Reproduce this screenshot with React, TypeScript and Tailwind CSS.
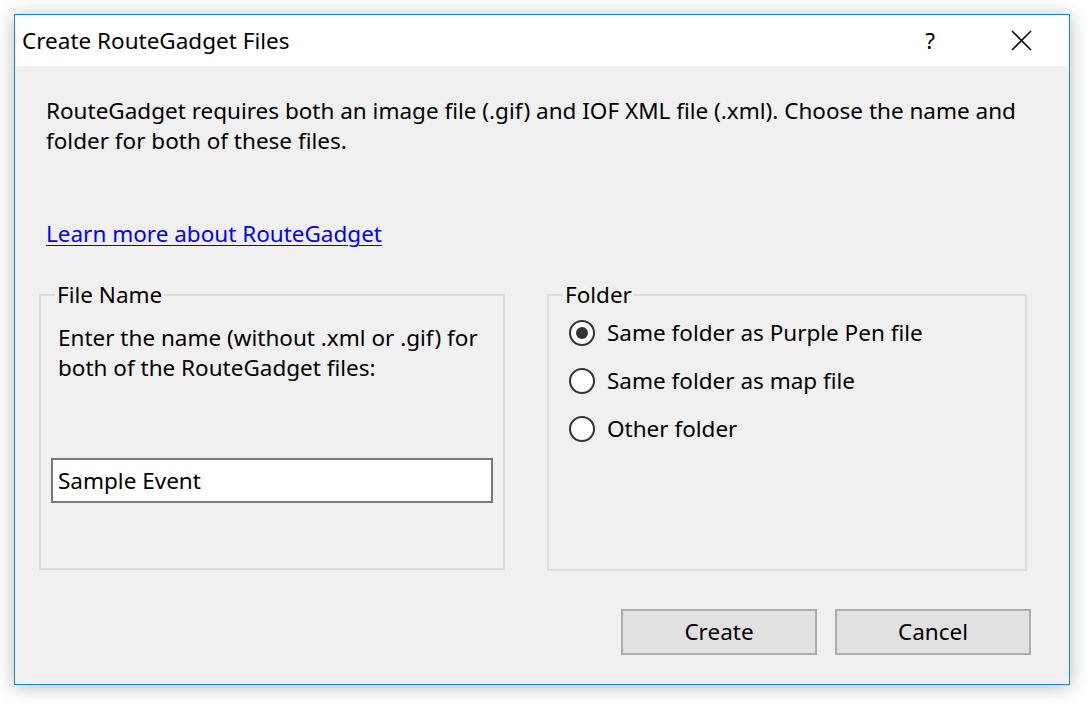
import React from "react";

function Radio({ checked, label }: { checked?: boolean; label: string }) {
  return (
    <div className="flex items-center h-[26px]">
      <div className="w-[26px] h-[26px] rounded-full border-2 border-[#333333] bg-white flex items-center justify-center shrink-0">
        {checked && <div className="w-[12px] h-[12px] rounded-full bg-[#333333]" />}
      </div>
      <span className="ml-[12px] whitespace-nowrap leading-[30px]">{label}</span>
    </div>
  );
}

export default function App() {
  return (
    <div
      className="w-[1088px] h-[703px] bg-white pl-[14px] pt-[14px] text-[22.5px] text-black"
      style={{ fontFamily: '"Noto Sans", "Open Sans", sans-serif' }}
    >
      <div className="w-[1056px] h-[671px] border border-[#1883d7] bg-[#f0f0f0] flex flex-col shadow-[0_2px_18px_rgba(0,0,0,0.28)]">
        {/* Title bar */}
        <div className="h-[51px] bg-white flex items-center shrink-0">
          <span className="ml-[7px] leading-[30px] whitespace-nowrap">Create RouteGadget Files</span>
          <span className="ml-auto leading-[30px]">?</span>
          <div className="ml-[76px] mr-[37px] w-[21px] h-[21px] flex items-center justify-center">
            <svg width="21" height="21" viewBox="0 0 21 21">
              <path d="M1 1 L20 20 M20 1 L1 20" stroke="#111" strokeWidth="1.6" fill="none" />
            </svg>
          </div>
        </div>

        {/* Body */}
        <div className="flex-1 pl-[24px] pt-[30px]">
          <p className="ml-[7px] leading-[30px] whitespace-nowrap">
            RouteGadget requires both an image file (.gif) and IOF XML file (.xml). Choose the name and
            <br />
            folder for both of these files.
          </p>
          <div className="ml-[7px] mt-[63px] leading-[30px]">
            <a className="text-[#0000ff] underline underline-offset-[3px] decoration-1 cursor-pointer">
              Learn more about RouteGadget
            </a>
          </div>

          <div className="flex mt-[45px]">
            {/* File Name group */}
            <div className="relative w-[466px] h-[276px] border-2 border-[#dcdcdc] pt-[27px] pl-[10px]">
              <span className="absolute -top-[16px] left-[14px] px-[2px] bg-[#f0f0f0] leading-[30px]">File Name</span>
              <p className="ml-[7px] leading-[30px] whitespace-nowrap">
                Enter the name (without .xml or .gif) for
                <br />
                both of the RouteGadget files:
              </p>
              <div className="mt-[75px] w-[442px] h-[45px] border-2 border-[#7a7a7a] bg-white flex items-center pl-[5px]">
                <span className="leading-[30px]">Sample Event</span>
              </div>
            </div>

            {/* Folder group */}
            <div className="relative ml-[42px] w-[480px] h-[277px] border-2 border-[#dcdcdc] pt-[24px] pl-[20px]">
              <span className="absolute -top-[16px] left-[14px] px-[2px] bg-[#f0f0f0] leading-[30px]">Folder</span>
              <div className="flex flex-col gap-[22px]">
                <Radio checked label="Same folder as Purple Pen file" />
                <Radio label="Same folder as map file" />
                <Radio label="Other folder" />
              </div>
            </div>
          </div>

          <div className="flex justify-end mt-[38px] mr-[38px] gap-[18px]">
            <button className="w-[196px] h-[46px] border-2 border-[#adadad] bg-[#e1e1e1] leading-[30px]">Create</button>
            <button className="w-[196px] h-[46px] border-2 border-[#adadad] bg-[#e1e1e1] leading-[30px]">Cancel</button>
          </div>
        </div>
      </div>
    </div>
  );
}
